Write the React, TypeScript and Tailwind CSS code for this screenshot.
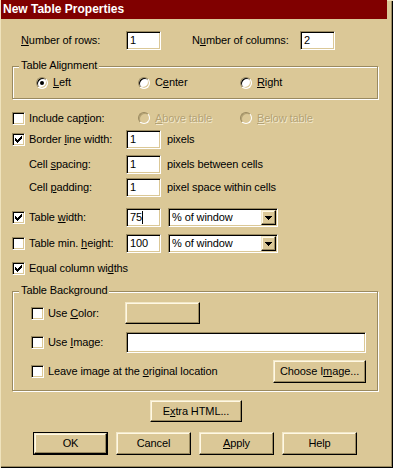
import type { ReactNode } from "react";

const sunken =
  "border border-t-[#9a8a60] border-l-[#9a8a60] border-b-white border-r-white shadow-[inset_1px_1px_0_#000,inset_-1px_-1px_0_#dbc897]";
const raised =
  "border border-t-[#f2e8c8] border-l-[#f2e8c8] border-b-black border-r-black shadow-[inset_-1px_-1px_0_#9a8a60,inset_1px_1px_0_#fff8e4]";
const etched = "border border-[#9a8a60] shadow-[1px_1px_0_#fff,inset_1px_1px_0_#fff]";

function U({ children }: { children: ReactNode }) {
  return <span className="underline decoration-1 underline-offset-[1px]">{children}</span>;
}

function Check({ checked }: { checked?: boolean }) {
  return (
    <span className={`flex h-[13px] w-[13px] shrink-0 items-center justify-center bg-white ${sunken}`}>
      {checked && (
        <svg width="7" height="7" viewBox="0 0 7 7" shapeRendering="crispEdges">
          <path
            d="M6 0h1v1h-1zM5 1h2v1h-2zM0 2h1v1h-1zM4 2h3v1h-3zM0 3h2v1h-2zM3 3h3v1h-3zM0 4h5v1h-5zM1 5h3v1h-3zM2 6h1v1h-1z"
            fill="#000"
          />
        </svg>
      )}
    </span>
  );
}

function Radio({ on, disabled }: { on?: boolean; disabled?: boolean }) {
  return (
    <span
      className={`flex h-[12px] w-[12px] shrink-0 items-center justify-center rounded-full border border-t-[#9a8a60] border-l-[#9a8a60] border-b-white border-r-white ${
        disabled
          ? "bg-[#dbc897] shadow-[inset_1px_1px_0_#b3a274]"
          : "bg-white shadow-[inset_1px_1px_0_#000,inset_-1px_-1px_0_#dbc897]"
      }`}
    >
      {on && <span className="h-[4px] w-[4px] rounded-full bg-black" />}
    </span>
  );
}

function Field({ w, value, caret }: { w: string; value?: string; caret?: boolean }) {
  return (
    <div className={`flex h-[19px] ${w} shrink-0 items-center bg-white pl-[3px] ${sunken}`}>
      <span>{value}</span>
      {caret && <span className="h-[13px] w-px bg-black" />}
    </div>
  );
}

function Select() {
  return (
    <div className={`flex h-[19px] w-[110px] shrink-0 items-center bg-white pl-[3px] pr-[1px] ${sunken}`}>
      <span className="flex-1">% of window</span>
      <span className={`flex h-[15px] w-[15px] items-center justify-center bg-[#dbc897] ${raised}`}>
        <svg width="7" height="4" viewBox="0 0 7 4" shapeRendering="crispEdges">
          <path d="M0 0h7v1h-7zM1 1h5v1h-5zM2 2h3v1h-3zM3 3h1v1h-1z" fill="#000" />
        </svg>
      </span>
    </div>
  );
}

function Button({ w, h, children }: { w: string; h: string; children?: ReactNode }) {
  return (
    <div className={`flex ${w} ${h} shrink-0 items-center justify-center bg-[#dbc897] ${raised}`}>{children}</div>
  );
}

export default function App() {
  return (
    <div className="relative h-[468px] w-[393px] overflow-hidden bg-[#dbc897] text-[11px] leading-[13px] tracking-[-0.1px] text-black [font-family:'Liberation_Sans',Arial,sans-serif] shadow-[inset_1px_1px_0_#efe3bd,inset_-1px_-1px_0_#000,inset_-2px_-2px_0_#9a8a60]">
      {/* title bar */}
      <div className="ml-[1px] flex h-[19px] w-[386px] items-center bg-[#800000] pl-[2px] text-[12px] font-bold tracking-normal text-white">
        New Table Properties
      </div>

      {/* rows / columns */}
      <div className="mt-[12px] flex h-[19px] items-center pl-[21px]">
        <span className="w-[105px]">
          <U>N</U>umber of rows:
        </span>
        <Field w="w-[35px]" value="1" />
        <span className="ml-[31px] w-[108px]">
          N<U>u</U>mber of columns:
        </span>
        <Field w="w-[35px]" value="2" />
      </div>

      {/* table alignment */}
      <div className={`relative ml-[12px] mt-[16px] flex h-[33px] w-[366px] items-center pl-[23px] ${etched}`}>
        <span className="absolute -top-[8px] left-[6px] bg-[#dbc897] px-[2px]">Table Alignment</span>
        <div className="flex w-[102px] items-center gap-[5px]">
          <Radio on />
          <span>
            <U>L</U>eft
          </span>
        </div>
        <div className="flex w-[102px] items-center gap-[5px]">
          <Radio />
          <span>
            C<U>e</U>nter
          </span>
        </div>
        <div className="flex items-center gap-[5px]">
          <Radio />
          <span>
            <U>R</U>ight
          </span>
        </div>
      </div>

      {/* caption */}
      <div className="mt-[11px] flex h-[16px] items-center pl-[12px]">
        <div className="flex w-[126px] items-center gap-[4px]">
          <Check />
          <span>
            Include cap<U>t</U>ion:
          </span>
        </div>
        <div className="flex w-[102px] items-center gap-[5px] text-[#b3a274] [text-shadow:1px_1px_0_#f4ead0]">
          <Radio disabled />
          <span>
            <U>A</U>bove table
          </span>
        </div>
        <div className="flex items-center gap-[5px] text-[#b3a274] [text-shadow:1px_1px_0_#f4ead0]">
          <Radio disabled />
          <span>
            <U>B</U>elow table
          </span>
        </div>
      </div>

      {/* border line width */}
      <div className="mt-[4px] flex h-[19px] items-center pl-[12px]">
        <div className="flex w-[114px] items-center gap-[4px]">
          <Check checked />
          <span>
            Border <U>l</U>ine width:
          </span>
        </div>
        <Field w="w-[35px]" value="1" />
        <span className="ml-[6px]">pixels</span>
      </div>

      <div className="mt-[6px] flex h-[19px] items-center pl-[29px]">
        <span className="w-[97px]">
          Cell <U>s</U>pacing:
        </span>
        <Field w="w-[35px]" value="1" />
        <span className="ml-[6px]">pixels between cells</span>
      </div>

      <div className="mt-[4px] flex h-[19px] items-center pl-[29px]">
        <span className="w-[97px]">
          Cell <U>p</U>adding:
        </span>
        <Field w="w-[35px]" value="1" />
        <span className="ml-[6px]">pixel space within cells</span>
      </div>

      {/* table width */}
      <div className="mt-[11px] flex h-[19px] items-center pl-[12px]">
        <div className="flex w-[114px] items-center gap-[4px]">
          <Check checked />
          <span>
            Table <U>w</U>idth:
          </span>
        </div>
        <Field w="w-[35px]" value="75" caret />
        <div className="ml-[7px]">
          <Select />
        </div>
      </div>

      <div className="mt-[7px] flex h-[19px] items-center pl-[12px]">
        <div className="flex w-[114px] items-center gap-[4px]">
          <Check />
          <span>
            Table min. <U>h</U>eight:
          </span>
        </div>
        <Field w="w-[35px]" value="100" />
        <div className="ml-[7px]">
          <Select />
        </div>
      </div>

      <div className="mt-[8px] flex h-[14px] items-center gap-[4px] pl-[12px]">
        <Check checked />
        <span>
          Equal column wi<U>d</U>ths
        </span>
      </div>

      {/* table background */}
      <div className={`relative ml-[12px] mt-[16px] h-[100px] w-[366px] pl-[18px] ${etched}`}>
        <span className="absolute -top-[8px] left-[6px] bg-[#dbc897] px-[2px]">Table Background</span>

        <div className="mt-[10px] flex h-[22px] items-center">
          <div className="flex w-[94px] items-center gap-[4px]">
            <Check />
            <span>
              Use <U>C</U>olor:
            </span>
          </div>
          <Button w="w-[75px]" h="h-[22px]" />
        </div>

        <div className="mt-[8px] flex h-[21px] items-center">
          <div className="flex w-[95px] items-center gap-[4px]">
            <Check />
            <span>
              Use <U>I</U>mage:
            </span>
          </div>
          <div className={`h-[21px] w-[240px] bg-white ${sunken}`} />
        </div>

        <div className="mt-[7px] flex h-[23px] items-center">
          <div className="flex flex-1 items-center gap-[4px]">
            <Check />
            <span>
              Leave image at the <U>o</U>riginal location
            </span>
          </div>
          <div className="mr-[11px]">
            <Button w="w-[93px]" h="h-[23px]">
              Choose I<U>m</U>age...
            </Button>
          </div>
        </div>
      </div>

      <div className="mt-[9px] pl-[150px]">
        <Button w="w-[92px]" h="h-[22px]">
          E<U>x</U>tra HTML...
        </Button>
      </div>

      {/* dialog buttons */}
      <div className="mt-[10px] flex h-[23px] gap-[8px] pl-[33px]">
        <div className="flex h-[23px] w-[75px] border border-black">
          <Button w="w-full" h="h-full">
            OK
          </Button>
        </div>
        <Button w="w-[75px]" h="h-[23px]">
          Cancel
        </Button>
        <Button w="w-[75px]" h="h-[23px]">
          <U>A</U>pply
        </Button>
        <Button w="w-[75px]" h="h-[23px]">
          Help
        </Button>
      </div>
    </div>
  );
}
